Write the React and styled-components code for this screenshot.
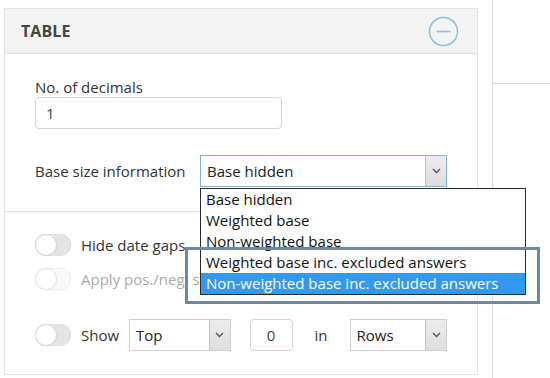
import React from 'react';
import styled, { createGlobalStyle } from 'styled-components';

const GlobalStyle = createGlobalStyle`
  html, body {
    margin: 0;
    padding: 0;
    background: #fff;
    font-family: 'Open Sans', 'Liberation Sans', sans-serif;
    color: #333;
  }
`;

const Page = styled.div`
  position: relative;
  display: flex;
  width: 550px;
  height: 378px;
  overflow: hidden;
`;

const Panel = styled.section`
  margin: 8px 0 0 4px;
  width: 474px;
  height: 367px;
  border: 1px solid #e4e4e4;
  flex-shrink: 0;
  box-sizing: border-box;
`;

const Header = styled.header`
  display: flex;
  align-items: center;
  justify-content: space-between;
  height: 45px;
  padding: 0 18px 0 16px;
  background: #f3f3f3;
  border-bottom: 1px solid #e2e2e2;
  box-sizing: border-box;
`;

const Title = styled.h2`
  margin: 0;
  font-size: 16px;
  font-weight: 700;
  color: #444;
  letter-spacing: 0.1px;
`;

const Section = styled.div`
  padding: ${p => p.$pad};
  border-bottom: ${p => (p.$divider ? '1px solid #e4e4e4' : 'none')};
`;

const Label = styled.div`
  font-size: 15px;
  line-height: 20px;
  color: ${p => (p.$muted ? '#aaa' : '#333')};
  white-space: nowrap;
`;

const TextInput = styled.div`
  display: flex;
  align-items: center;
  width: ${p => p.$w}px;
  height: 32px;
  padding: 0 ${p => p.$px || 10}px;
  border: 1px solid #d4d4d4;
  border-radius: 4px;
  font-size: 15px;
  color: #444;
  box-sizing: border-box;
  justify-content: ${p => (p.$center ? 'center' : 'flex-start')};
`;

const FieldRow = styled.div`
  display: flex;
  align-items: center;
  margin-top: ${p => p.$mt || 0}px;
`;

const RowLabel = styled(Label)`
  width: 165px;
  flex-shrink: 0;
`;

const SelectWrap = styled.div`
  position: relative;
`;

const SelectBox = styled.div`
  display: flex;
  align-items: stretch;
  width: ${p => p.$w}px;
  height: 32px;
  border: 1px solid ${p => (p.$focus ? '#7ab3d3' : '#d0d0d0')};
  box-sizing: border-box;
  background: #fff;
`;

const SelectValue = styled.div`
  flex: 1;
  display: flex;
  align-items: center;
  padding-left: 6px;
  font-size: 15px;
  color: #222;
`;

const ArrowBtn = styled.div`
  width: 20px;
  display: flex;
  align-items: center;
  justify-content: center;
  background: linear-gradient(#ececec, #dedede);
  border-left: 1px solid #c4c4c4;
`;

const DropList = styled.ul`
  position: absolute;
  top: 33px;
  left: 0;
  width: 326px;
  margin: 0;
  padding: 0;
  list-style: none;
  background: #fff;
  border: 1px solid #2b2b2b;
  box-sizing: border-box;
  z-index: 2;
`;

const Option = styled.li`
  height: 21px;
  line-height: 21px;
  padding-left: 5px;
  font-size: 15px;
  color: ${p => (p.$active ? '#fff' : '#111')};
  background: ${p => (p.$active ? '#3399f0' : 'transparent')};
  white-space: nowrap;
`;

const ToggleRow = styled.div`
  display: flex;
  align-items: center;
  gap: 10px;
  height: 24px;
  margin-top: ${p => p.$mt || 0}px;
`;

const Toggle = styled.span`
  position: relative;
  width: 34px;
  height: 20px;
  border-radius: 10px;
  border: 1px solid ${p => (p.$disabled ? '#ececec' : '#dedede')};
  background: ${p => (p.$disabled ? '#fafafa' : 'linear-gradient(90deg, #fff 45%, #e4e4e4 55%)')};
  flex-shrink: 0;

  &::after {
    content: '';
    position: absolute;
    top: 0;
    left: 0;
    width: 20px;
    height: 20px;
    border-radius: 50%;
    background: #fff;
    box-shadow: 0 0 0 1px ${p => (p.$disabled ? '#e8e8e8' : '#dadada')},
      1px 1px 2px rgba(0, 0, 0, ${p => (p.$disabled ? 0.04 : 0.1)});
  }
`;

const ShowRow = styled.div`
  display: flex;
  align-items: center;
  margin-top: 28px;
  height: 32px;
`;

const Inline = styled.span`
  font-size: 15px;
  color: #333;
  margin: 0 ${p => p.$mr}px 0 ${p => p.$ml}px;
`;

const Side = styled.div`
  margin-left: 14px;
  flex: 1;
  border-left: 1px solid #dcdcdc;
  display: flex;
  flex-direction: column;
`;

const SideTop = styled.div`
  height: 83px;
  border-bottom: 1px solid #d6d6d6;
`;

const Highlight = styled.div`
  position: absolute;
  left: 185px;
  top: 247px;
  width: 355px;
  height: 57px;
  border: 3px solid #6f88a4;
  box-sizing: border-box;
  z-index: 3;
  pointer-events: none;
`;

const Chevron = () => (
  <svg width="9" height="6" viewBox="0 0 9 6">
    <path d="M1 1l3.5 3.5L8 1" fill="none" stroke="#555" strokeWidth="1.4" />
  </svg>
);

const CollapseIcon = () => (
  <svg width="31" height="31" viewBox="0 0 31 31">
    <circle cx="15.5" cy="15.5" r="14" fill="none" stroke="#86c6df" strokeWidth="1.6" />
    <path d="M8.5 15.5h14" stroke="#86c6df" strokeWidth="1.6" />
  </svg>
);

const Select = ({ value, width, focus }) => (
  <SelectBox $w={width} $focus={focus}>
    <SelectValue>{value}</SelectValue>
    <ArrowBtn>
      <Chevron />
    </ArrowBtn>
  </SelectBox>
);

const options = [
  'Base hidden',
  'Weighted base',
  'Non-weighted base',
  'Weighted base inc. excluded answers',
  'Non-weighted base inc. excluded answers',
];

export default function App() {
  return (
    <Page>
      <GlobalStyle />
      <Panel>
        <Header>
          <Title>TABLE</Title>
          <CollapseIcon />
        </Header>

        <Section $pad="23px 30px 24px" $divider>
          <Label>No. of decimals</Label>
          <TextInput $w={247}>1</TextInput>
          <FieldRow $mt={26}>
            <RowLabel>Base size information</RowLabel>
            <SelectWrap>
              <Select value="Base hidden" width={247} focus />
              <DropList>
                {options.map((o, i) => (
                  <Option key={o} $active={i === options.length - 1}>
                    {o}
                  </Option>
                ))}
              </DropList>
            </SelectWrap>
          </FieldRow>
        </Section>

        <Section $pad="21px 30px 0">
          <ToggleRow>
            <Toggle />
            <Label>Hide date gaps</Label>
          </ToggleRow>
          <ToggleRow $mt={10}>
            <Toggle $disabled />
            <Label $muted>Apply pos./neg. significance</Label>
          </ToggleRow>
          <ShowRow>
            <Toggle />
            <Inline $ml={10} $mr={10}>Show</Inline>
            <Select value="Top" width={103} />
            <Inline $ml={19} $mr={0}>
              <TextInput $w={43} $center>0</TextInput>
            </Inline>
            <Inline $ml={22} $mr={22}>in</Inline>
            <Select value="Rows" width={99} />
          </ShowRow>
        </Section>
      </Panel>
      <Side>
        <SideTop />
      </Side>
      <Highlight />
    </Page>
  );
}
